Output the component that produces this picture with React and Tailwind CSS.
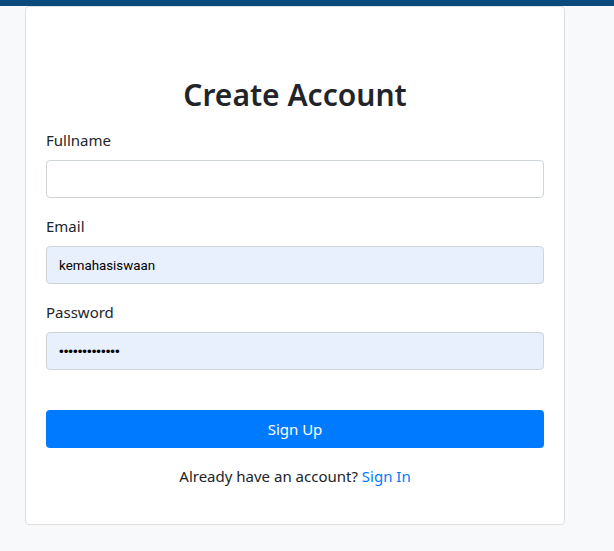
import React from "react";

export default function App() {
  const font = { fontFamily: '"Noto Sans", "Open Sans", sans-serif' };
  return (
    <div className="min-h-[551px] bg-[#f8f9fa] text-[#212529]" style={font}>
      <div className="h-[6px] bg-[#0b4a7c]" />
      <div className="ml-[25px] w-[540px] rounded-[4px] border border-[#dfdfdf] bg-white px-[20px] pt-[69px] pb-[36px]">
        <h2 className="mb-[14px] text-center text-[30px] font-semibold leading-[38px]">Create Account</h2>
        <div className="mb-[16px]">
          <label className="mb-[8px] block text-[15px] leading-[24px]">Fullname</label>
          <input
            type="text"
            className="block h-[38px] w-full rounded-[4px] border border-[#ced4da] bg-white px-[12px] outline-none"
          />
        </div>
        <div className="mb-[16px]">
          <label className="mb-[8px] block text-[15px] leading-[24px]">Email</label>
          <input
            type="text"
            readOnly
            defaultValue="kemahasiswaan"
            className="block h-[38px] w-full rounded-[4px] border border-[#ced4da] bg-[#e8f0fe] px-[12px] text-[13.33px] text-black outline-none"
            style={{ fontFamily: 'Roboto, "Liberation Sans", Arial, sans-serif' }}
          />
        </div>
        <div className="mb-[40px]">
          <label className="mb-[8px] block text-[15px] leading-[24px]">Password</label>
          <input
            type="password"
            readOnly
            defaultValue="kemahasiswaan"
            className="block h-[38px] w-full rounded-[4px] border border-[#ced4da] bg-[#e8f0fe] px-[12px] text-[13.33px] text-black outline-none"
            style={{ fontFamily: '"Liberation Sans", Arial, sans-serif' }}
          />
        </div>
        <button className="block h-[38px] w-full rounded-[4px] bg-[#007bff] text-[15px] text-white">Sign Up</button>
        <p className="mt-[16px] text-center text-[15px] leading-[24px]">
          Already have an account? <a className="text-[#007bff]">Sign In</a>
        </p>
      </div>
    </div>
  );
}
